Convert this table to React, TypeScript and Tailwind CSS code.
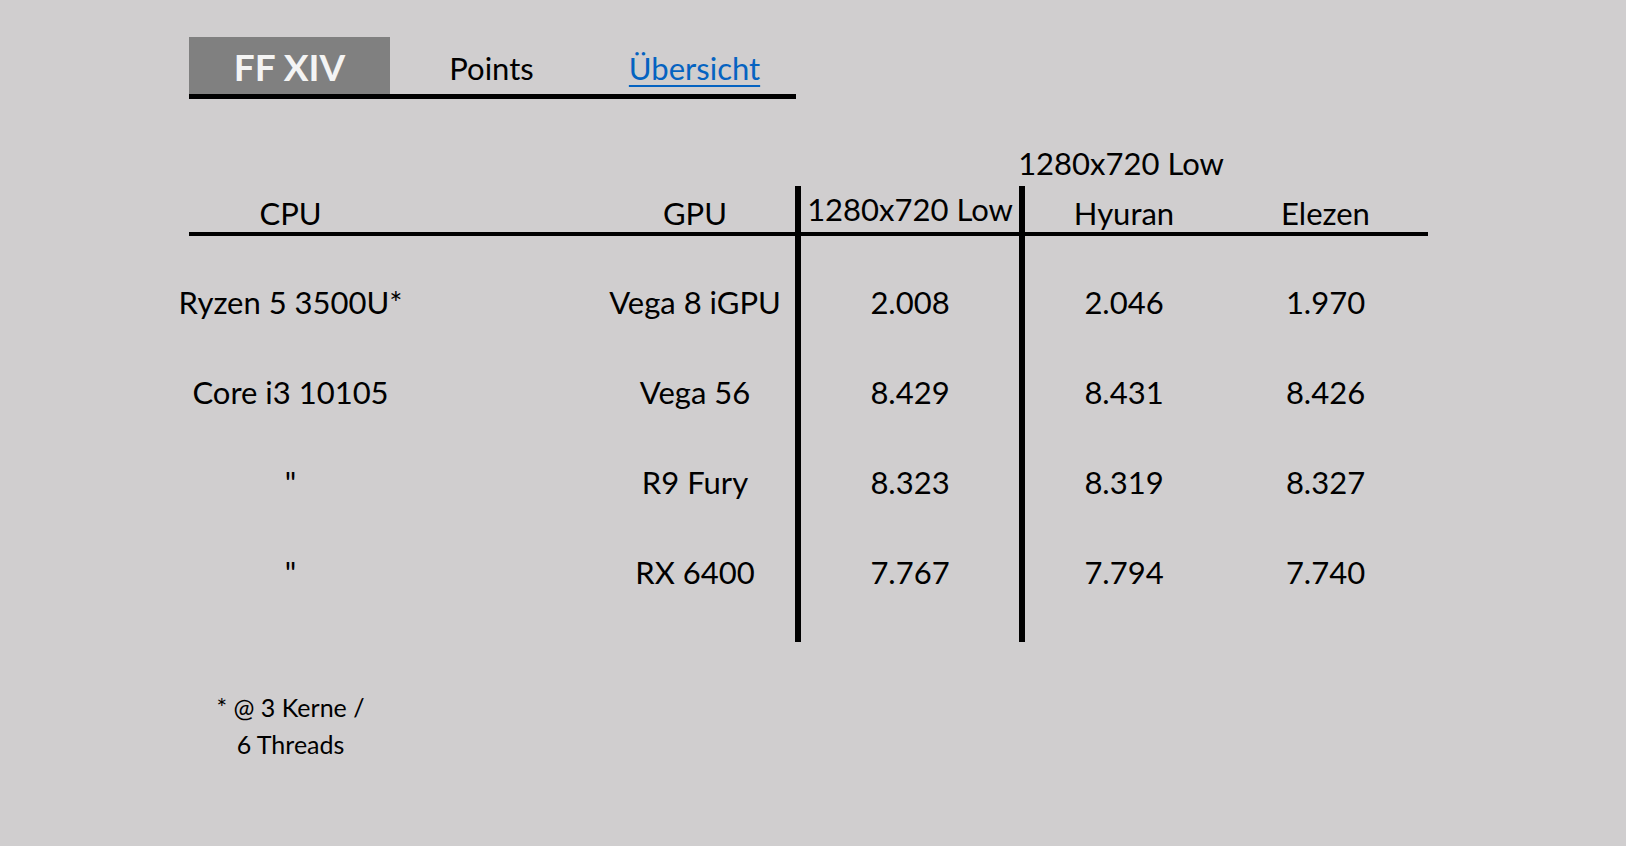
const rows = [
  { cpu: "Ryzen 5 3500U*", gpu: "Vega 8 iGPU", low: "2.008", hyuran: "2.046", elezen: "1.970" },
  { cpu: "Core i3 10105", gpu: "Vega 56", low: "8.429", hyuran: "8.431", elezen: "8.426" },
  { cpu: '"', gpu: "R9 Fury", low: "8.323", hyuran: "8.319", elezen: "8.327" },
  { cpu: '"', gpu: "RX 6400", low: "7.767", hyuran: "7.794", elezen: "7.740" },
];

type Col = {
  key: "cpu" | "gpu" | "low" | "hyuran" | "elezen" | null;
  head: string;
  width: string;
  bar?: boolean;
  headAlign?: string;
};

const cols: Col[] = [
  { key: "cpu", head: "CPU", width: "w-[203px]" },
  { key: null, head: "", width: "w-[203px]" },
  { key: "gpu", head: "GPU", width: "w-[200px]" },
  { key: "low", head: "1280x720 Low", width: "w-[224px]", bar: true, headAlign: "items-center" },
  { key: "hyuran", head: "Hyuran", width: "w-[204px]", bar: true },
  { key: "elezen", head: "Elezen", width: "w-[205px]" },
];

function TabBar() {
  return (
    <div className="flex h-[62px] w-[607px] border-b-[5px] border-black">
      <div className="flex w-[201px] items-center justify-center bg-[#808080] pt-[3px] text-[37px] font-bold text-[#f4f4f4]">
        FF XIV
      </div>
      <div className="flex w-[203px] items-center justify-center pt-[5px] text-[31px] text-black">Points</div>
      <div className="flex w-[203px] items-center justify-center pt-[5px] text-[31px]">
        <span className="text-[#0563c1] underline decoration-[2px] underline-offset-[5px]">Übersicht</span>
      </div>
    </div>
  );
}

export default function App() {
  return (
    <div
      className="min-h-screen w-full bg-[#d0cecf] pl-[189px] pt-[37px] text-black"
      style={{ fontFamily: "Lato, 'Open Sans', sans-serif" }}
    >
      <TabBar />

      {/* label above the Hyuran / Elezen group */}
      <div className="mt-[44px] flex h-[43px]">
        <div className="w-[830px]" />
        <div className="flex w-[204px] justify-center whitespace-nowrap text-[31px] leading-[40px]">
          1280x720 Low
        </div>
      </div>

      <div className="flex">
        {cols.map((c, i) => (
          <div key={i} className={`flex flex-col ${c.width} ${c.bar ? "border-l-[6px] border-black" : ""}`}>
            <div
              className={`flex h-[50px] justify-center whitespace-nowrap border-b-4 border-black text-[31px] leading-[38px] ${
                c.headAlign ?? "items-end"
              }`}
            >
              {c.head}
            </div>
            <div className="h-[21px]" />
            {rows.map((r, j) => (
              <div key={j} className="flex h-[90px] items-center justify-center whitespace-nowrap text-[31px]">
                {c.key ? r[c.key] : ""}
              </div>
            ))}
            <div className="h-[25px]" />
          </div>
        ))}
      </div>

      <div className="mt-[47px] flex w-[203px] flex-col items-center text-[25px] leading-[37px]">
        <span>* @ 3 Kerne /</span>
        <span>6 Threads</span>
      </div>
    </div>
  );
}
